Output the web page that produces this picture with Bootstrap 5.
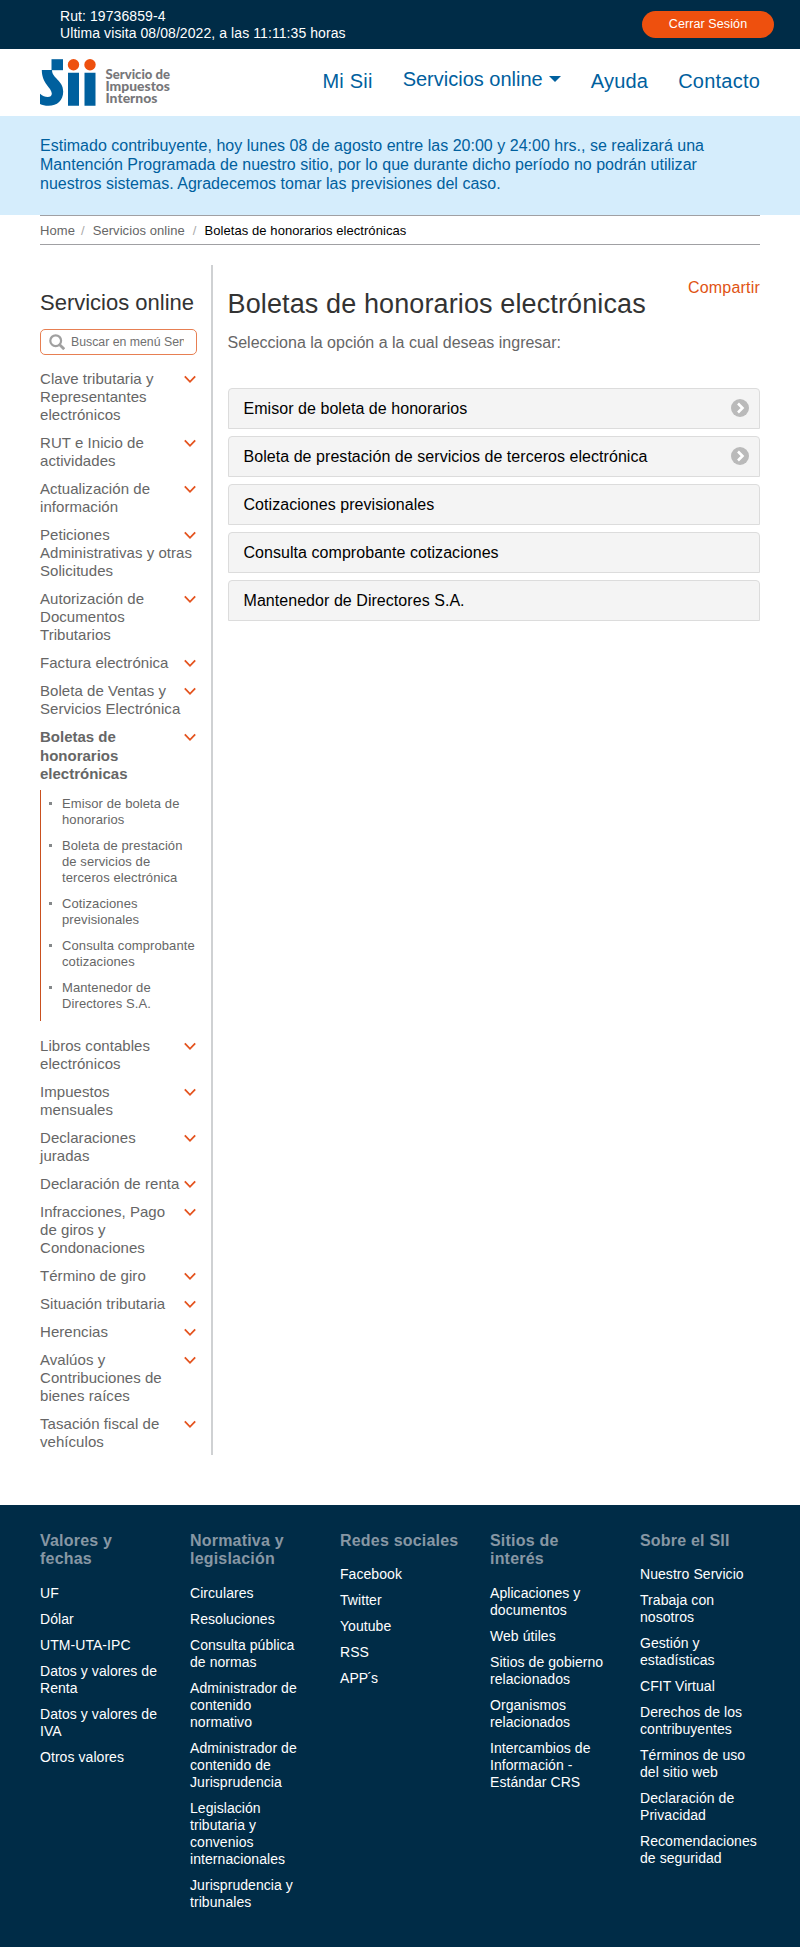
<!DOCTYPE html>
<html lang="es">
<head>
<meta charset="utf-8">
<meta name="viewport" content="width=device-width, initial-scale=1">
<title>Boletas de honorarios electrónicas</title>
<link rel="stylesheet" href="https://cdn.jsdelivr.net/npm/bootstrap@5.3.0/dist/css/bootstrap.min.css">
<style>
body{font-family:"Liberation Sans",Arial,sans-serif;color:#666;background:#fff;font-size:15px;line-height:18px;letter-spacing:.05px}
a{text-decoration:none;color:inherit}
.topbar{background:#002c47;color:#fff;height:49px;padding:8px 26px 0 60px;font-size:14px;line-height:17px;letter-spacing:.08px}
.btn-exit{background:#ee500e;color:#fff;border:0;border-radius:14px;width:132px;height:27px;margin-top:3px;font-size:12.5px;line-height:27px;padding:0;letter-spacing:.1px}
.brandbar{height:67px;padding:0 40px}
.mainnav{gap:30px;color:#00609e;font-size:20px;line-height:24px;padding-top:20px;letter-spacing:.22px}
.mainnav .nav-link{padding:0;color:inherit}
.mainnav .has-menu{margin-top:-2px;letter-spacing:0}
.caret{display:inline-block;border:6px solid transparent;border-top-color:#00609e;border-bottom:0;margin-left:6px;vertical-align:4px}
.notice{background:#d5edfc;color:#00609e;height:99px;padding:20px 40px 0;font-size:16px;line-height:19px;letter-spacing:.015px}
.crumbs{margin:0 40px;border:solid #a0a0a3;border-width:1px 0;height:30px;font-size:13px;line-height:29px;color:#666;letter-spacing:.07px}
.crumbs .sep{color:#aaa;margin:0 8px 0 6px}
.crumbs .sep-last{margin:0 8px}
.wrap{margin:20px 40px 50px;height:1190px}
.side{width:173px;border-right:2px solid #cfd1d3;padding:25px 14px 0 0;flex:none}
.side h2{font-size:22px;line-height:26px;color:#333;margin:0 0 13px;font-weight:400;white-space:nowrap;letter-spacing:0}
.search{border:1px solid #e77f52;border-radius:5px;width:157px;height:26px;padding-left:8px;margin-bottom:15px}
.search input{border:0;outline:0;width:113px;padding:0;margin-left:6px;font-size:12.3px;background:none;font-family:inherit;line-height:16px;height:20px}
.search input::placeholder{color:#707070;opacity:1}
.menu-item{width:157px;margin-bottom:10px;white-space:nowrap}
.menu-item svg{width:12px;height:9px;margin:5px 0 0 1px;flex:none;fill:none;stroke:#e4531e;stroke-width:1.8}
.menu-item>span{width:143px}
.current{font-weight:700;line-height:18.5px;margin-bottom:7px;height:55px;letter-spacing:0}
.submenu{border-left:1px solid #c9501f;width:157px;height:231px;padding:6px 0 0 21px;margin:0 0 16px;font-size:13px;line-height:16px;white-space:nowrap;list-style:none;letter-spacing:.1px}
.submenu li{margin-bottom:10px;position:relative}
.submenu li::before{content:"";position:absolute;left:-13px;top:6px;width:3px;height:3px;background:#85888a}
.content{padding:0 0 0 14.5px;flex:1}
.content h1{font-size:27px;line-height:32px;color:#333;font-weight:400;margin:23px 0 0;letter-spacing:.12px;white-space:nowrap}
.share{color:#df5313;font-size:16px;line-height:18px;margin-top:14px;letter-spacing:.2px}
.intro{font-size:16px;line-height:20px;margin:13px 0 35px;letter-spacing:0}
.option{height:41px;background:#f4f4f4;border:1px solid #dcdcdc;border-radius:4px 4px 0 0;margin-bottom:7px;padding:0 10px 0 15px;color:#000;font-size:16px;line-height:40px}
.option svg{width:18px;height:18px;margin-top:10px}
.foot{background:#002c47;color:#fff;height:442px;padding:27px 40px 0;font-size:14px;line-height:17px;letter-spacing:.06px}
.foot-col{width:150px;white-space:nowrap}
.foot-col:last-child{width:120px}
.foot h3{font-size:16px;line-height:18px;font-weight:700;color:#8797a4;margin:0 0 17px;letter-spacing:.2px}
.foot h3.single{margin-bottom:16px}
.foot ul{margin:0;padding:0;list-style:none}
.foot li{margin-bottom:9px}
.accent{letter-spacing:-1px;margin-left:-1px}
</style>
</head>
<body>
<svg width="0" height="0" class="d-none"><symbol id="chev" viewBox="0 0 12 9"><path d="M.8 1.3 6 6.8l5.2-5.5"/></symbol></svg>
<div class="topbar d-flex justify-content-between">
<div>Rut: 19736859-4<br>Ultima visita 08/08/2022, a las 11:11:35 horas</div>
<button class="btn btn-exit">Cerrar Sesión</button>
</div>
<header class="brandbar d-flex justify-content-between">
<svg width="135" height="60" viewBox="0 0 135 60"><g fill="#00609e"><path d="M11.500 10.200H23v11H11.500z"/><path d="M1.800 21H12c0 8.500 11.200 10 11.200 21.500 0 9.200-6 14.300-14.700 14.300-3.500 0-6.200-.6-8.500-1.800V44.800c2.700 2.200 5 3.200 7.700 3.200 2.500 0 4.100-1.300 4.100-3.300C11.800 38.500 1.800 35 1.800 21z"/><path d="M28 23.800h11v32.900H28zM44.500 23.800h11v32.900h-11z"/></g><g fill="#ee500e"><circle cx="33.500" cy="15.700" r="5.700"/><circle cx="50" cy="15.700" r="5.700"/></g><g font-family="Lato,sans-serif" font-weight="900" font-size="12.200" fill="#77777a" letter-spacing="0"><text x="65.500" y="30.300" textLength="64.500" lengthAdjust="spacingAndGlyphs">Servicio de</text><text x="65.500" y="42" textLength="64.500" lengthAdjust="spacingAndGlyphs">Impuestos</text><text x="65.500" y="53.500" textLength="52" lengthAdjust="spacingAndGlyphs">Internos</text></g></svg>
<nav class="mainnav nav flex-nowrap">
<a class="nav-link" href="#">Mi Sii</a><a class="nav-link has-menu" href="#">Servicios online<span class="caret"></span></a><a class="nav-link" href="#">Ayuda</a><a class="nav-link" href="#">Contacto</a>
</nav>
</header>
<div class="notice">Estimado contribuyente, hoy lunes 08 de agosto entre las 20:00 y 24:00 hrs., se realizará una<br>Mantención Programada de nuestro sitio, por lo que durante dicho período no podrán utilizar<br>nuestros sistemas. Agradecemos tomar las previsiones del caso.</div>
<nav class="crumbs d-flex"><a href="#">Home</a><span class="sep">/</span><a href="#">Servicios online</a><span class="sep sep-last">/</span><span class="text-black">Boletas de honorarios electrónicas</span></nav>
<main class="wrap d-flex">
<aside class="side">
<h2>Servicios online</h2>
<div class="search d-flex align-items-center"><svg width="16" height="16" viewBox="0 0 16 16" fill="none" stroke="#a0a0a0" stroke-width="2.200"><circle cx="6.700" cy="6.700" r="5.400"/><path d="m10.700 10.700 4.500 4.500" stroke-width="2.800"/></svg><input placeholder="Buscar en menú Servicios"></div>
<div class="menu-item d-flex"><span>Clave tributaria y<br>Representantes<br>electrónicos</span><svg><use href="#chev"/></svg></div>
<div class="menu-item d-flex"><span>RUT e Inicio de<br>actividades</span><svg><use href="#chev"/></svg></div>
<div class="menu-item d-flex"><span>Actualización de<br>información</span><svg><use href="#chev"/></svg></div>
<div class="menu-item d-flex"><span>Peticiones<br>Administrativas y otras<br>Solicitudes</span><svg><use href="#chev"/></svg></div>
<div class="menu-item d-flex"><span>Autorización de<br>Documentos<br>Tributarios</span><svg><use href="#chev"/></svg></div>
<div class="menu-item d-flex"><span>Factura electrónica</span><svg><use href="#chev"/></svg></div>
<div class="menu-item d-flex"><span>Boleta de Ventas y<br>Servicios Electrónica</span><svg><use href="#chev"/></svg></div>
<div class="menu-item current d-flex"><span>Boletas de<br>honorarios<br>electrónicas</span><svg><use href="#chev"/></svg></div>
<ul class="submenu"><li>Emisor de boleta de<br>honorarios</li><li>Boleta de prestación<br>de servicios de<br>terceros electrónica</li><li>Cotizaciones<br>previsionales</li><li>Consulta comprobante<br>cotizaciones</li><li>Mantenedor de<br>Directores S.A.</li></ul>
<div class="menu-item d-flex"><span>Libros contables<br>electrónicos</span><svg><use href="#chev"/></svg></div>
<div class="menu-item d-flex"><span>Impuestos<br>mensuales</span><svg><use href="#chev"/></svg></div>
<div class="menu-item d-flex"><span>Declaraciones<br>juradas</span><svg><use href="#chev"/></svg></div>
<div class="menu-item d-flex"><span>Declaración de renta</span><svg><use href="#chev"/></svg></div>
<div class="menu-item d-flex"><span>Infracciones, Pago<br>de giros y<br>Condonaciones</span><svg><use href="#chev"/></svg></div>
<div class="menu-item d-flex"><span>Término de giro</span><svg><use href="#chev"/></svg></div>
<div class="menu-item d-flex"><span>Situación tributaria</span><svg><use href="#chev"/></svg></div>
<div class="menu-item d-flex"><span>Herencias</span><svg><use href="#chev"/></svg></div>
<div class="menu-item d-flex"><span>Avalúos y<br>Contribuciones de<br>bienes raíces</span><svg><use href="#chev"/></svg></div>
<div class="menu-item d-flex"><span>Tasación fiscal de<br>vehículos</span><svg><use href="#chev"/></svg></div>
</aside>
<section class="content">
<div class="d-flex justify-content-between"><h1>Boletas de honorarios electrónicas</h1><a class="share" href="#">Compartir</a></div>
<p class="intro">Selecciona la opción a la cual deseas ingresar:</p>
<div class="option d-flex justify-content-between"><span>Emisor de boleta de honorarios</span><svg viewBox="0 0 18 18"><circle cx="9" cy="9" r="9" fill="#bababa"/><path d="m7 4.500 4.500 4.500L7 13.500" fill="none" stroke="#fff" stroke-width="2.600"/></svg></div>
<div class="option d-flex justify-content-between"><span>Boleta de prestación de servicios de terceros electrónica</span><svg viewBox="0 0 18 18"><circle cx="9" cy="9" r="9" fill="#bababa"/><path d="m7 4.500 4.500 4.500L7 13.500" fill="none" stroke="#fff" stroke-width="2.600"/></svg></div>
<div class="option">Cotizaciones previsionales</div>
<div class="option">Consulta comprobante cotizaciones</div>
<div class="option">Mantenedor de Directores S.A.</div>
</section>
</main>
<footer class="foot d-flex">
<div class="foot-col"><h3>Valores y<br>fechas</h3><ul><li>UF</li><li>Dólar</li><li>UTM-UTA-IPC</li><li>Datos y valores de<br>Renta</li><li>Datos y valores de<br>IVA</li><li>Otros valores</li></ul></div>
<div class="foot-col"><h3>Normativa y<br>legislación</h3><ul><li>Circulares</li><li>Resoluciones</li><li>Consulta pública<br>de normas</li><li>Administrador de<br>contenido<br>normativo</li><li>Administrador de<br>contenido de<br>Jurisprudencia</li><li>Legislación<br>tributaria y<br>convenios<br>internacionales</li><li>Jurisprudencia y<br>tribunales</li></ul></div>
<div class="foot-col"><h3 class="single">Redes sociales</h3><ul><li>Facebook</li><li>Twitter</li><li>Youtube</li><li>RSS</li><li>APP<span class="accent">´</span>s</li></ul></div>
<div class="foot-col"><h3>Sitios de<br>interés</h3><ul><li>Aplicaciones y<br>documentos</li><li>Web útiles</li><li>Sitios de gobierno<br>relacionados</li><li>Organismos<br>relacionados</li><li>Intercambios de<br>Información -<br>Estándar CRS</li></ul></div>
<div class="foot-col"><h3 class="single">Sobre el SII</h3><ul><li>Nuestro Servicio</li><li>Trabaja con<br>nosotros</li><li>Gestión y<br>estadísticas</li><li>CFIT Virtual</li><li>Derechos de los<br>contribuyentes</li><li>Términos de uso<br>del sitio web</li><li>Declaración de<br>Privacidad</li><li>Recomendaciones<br>de seguridad</li></ul></div>
</footer>
<script src="https://cdn.jsdelivr.net/npm/bootstrap@5.3.0/dist/js/bootstrap.bundle.min.js"></script>
</body>
</html>
